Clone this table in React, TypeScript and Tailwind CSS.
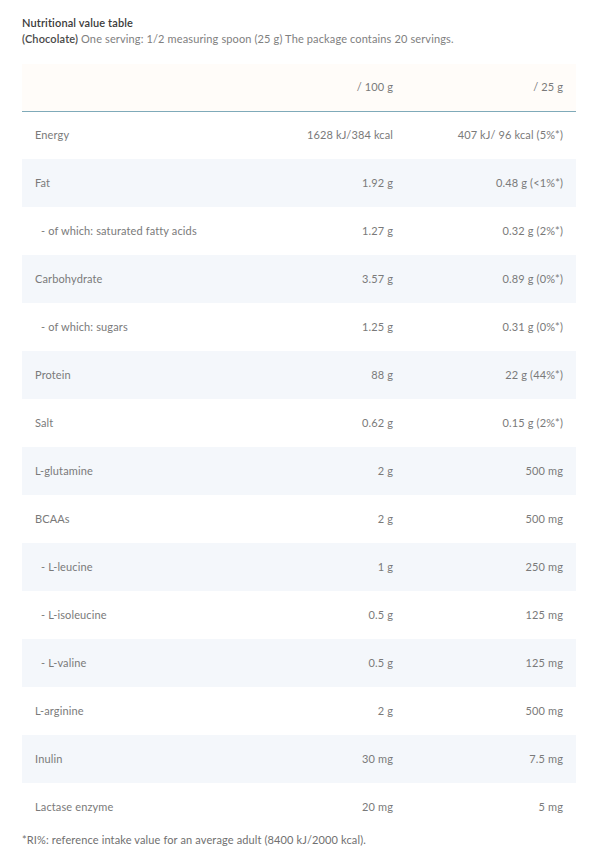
import React from 'react';

type Row = { label: string; per100: string; perServing: string; sub?: boolean };

const rows: Row[] = [
  { label: 'Energy', per100: '1628 kJ/384 kcal', perServing: '407 kJ/ 96 kcal (5%*)' },
  { label: 'Fat', per100: '1.92 g', perServing: '0.48 g (<1%*)' },
  { label: '- of which: saturated fatty acids', per100: '1.27 g', perServing: '0.32 g (2%*)', sub: true },
  { label: 'Carbohydrate', per100: '3.57 g', perServing: '0.89 g (0%*)' },
  { label: '- of which: sugars', per100: '1.25 g', perServing: '0.31 g (0%*)', sub: true },
  { label: 'Protein', per100: '88 g', perServing: '22 g (44%*)' },
  { label: 'Salt', per100: '0.62 g', perServing: '0.15 g (2%*)' },
  { label: 'L-glutamine', per100: '2 g', perServing: '500 mg' },
  { label: 'BCAAs', per100: '2 g', perServing: '500 mg' },
  { label: '- L-leucine', per100: '1 g', perServing: '250 mg', sub: true },
  { label: '- L-isoleucine', per100: '0.5 g', perServing: '125 mg', sub: true },
  { label: '- L-valine', per100: '0.5 g', perServing: '125 mg', sub: true },
  { label: 'L-arginine', per100: '2 g', perServing: '500 mg' },
  { label: 'Inulin', per100: '30 mg', perServing: '7.5 mg' },
  { label: 'Lactase enzyme', per100: '20 mg', perServing: '5 mg' },
];

function App() {
  return (
    <div className="min-h-screen bg-white text-[11px] tracking-[0.13px] text-[#7a7a7a] font-['Lato','Liberation_Sans',sans-serif]">
      <div className="px-[22px] pt-[15px]">
        {/* Heading */}
        <p className="font-semibold text-[#3a3a3a] leading-[16px]">Nutritional value table</p>
        <p className="leading-[16px] text-[#808080]">
          <span className="font-semibold text-[#4a4a4a]">(Chocolate)</span> One serving: 1/2 measuring spoon (25 g) The package contains 20 servings.
        </p>

        <table className="mt-[17px] w-[554px] border-collapse table-fixed">
          <colgroup>
            <col className="w-[214px]" />
            <col className="w-[170px]" />
            <col className="w-[170px]" />
          </colgroup>
          <thead>
            <tr className="h-[47px] bg-[#fffcf9] border-b border-[#7faab9]">
              <th className="font-normal text-left pl-[13px]"></th>
              <th className="font-normal text-right pr-[13px]">/ 100 g</th>
              <th className="font-normal text-right pr-[13px]">/ 25 g</th>
            </tr>
          </thead>
          <tbody>
            {rows.map((r, i) => (
              <tr key={r.label} className={i % 2 === 1 ? 'h-[48px] bg-[#f4f7fb]' : 'h-[48px] bg-white'}>
                <td className={r.sub ? 'pl-[19px]' : 'pl-[13px]'}>{r.label}</td>
                <td className="text-right pr-[13px]">{r.per100}</td>
                <td className="text-right pr-[13px]">{r.perServing}</td>
              </tr>
            ))}
          </tbody>
        </table>

        <p className="mt-[1px] text-[#707070]">*RI%: reference intake value for an average adult (8400 kJ/2000 kcal).</p>
      </div>
    </div>
  );
}

export default App;
